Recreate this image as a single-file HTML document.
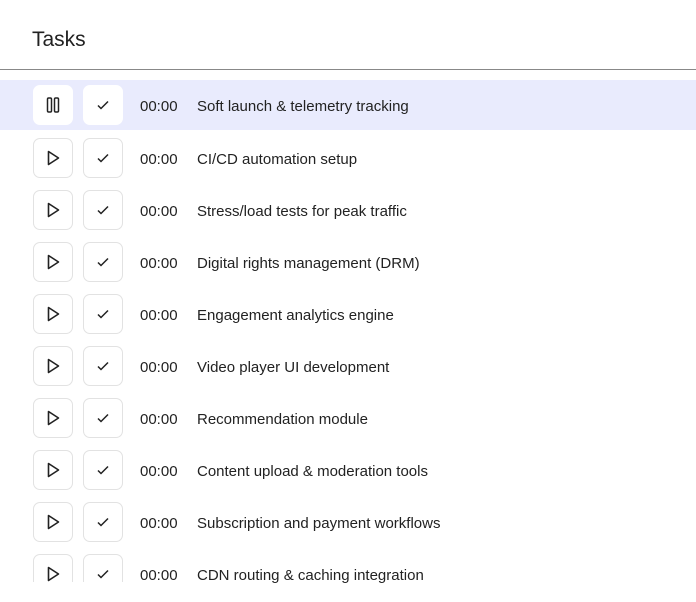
<!DOCTYPE html>
<html><head><style>
body{margin:0;width:696px;height:600px;overflow:hidden;background:#fff;font-family:"Liberation Sans",sans-serif;color:#222}
h1{position:absolute;left:32px;top:28px;margin:0;font-size:21px;font-weight:normal;color:#222}
.line{position:absolute;left:0;top:69px;width:696px;height:1px;background:#888}
.list{position:absolute;left:0;top:80px;width:696px;height:506px;overflow:hidden}
.row{position:relative;height:52px;display:flex;align-items:center;padding-top:2px;box-sizing:border-box}
.row.a{background:#e9ebfd;height:50px;margin-bottom:2px}
.btn{position:absolute;top:6px;width:38px;height:38px;border:1px solid #e2e2e2;border-radius:7px;background:#fff;display:flex;align-items:center;justify-content:center;box-sizing:content-box}
.row.a .btn{top:5px;border-color:#fff}
.b1{left:33px}.b2{left:83px}
.t{position:absolute;left:140px;font-size:15px}
.n{position:absolute;left:197px;font-size:15px}
.cut{position:absolute;left:0;top:582px;width:132px;height:20px;background:#fff}
</style></head><body>
<h1>Tasks</h1><div class="line"></div>
<div class="list">
<div class="row a"><div class="btn b1"><svg width="16" height="18"><rect x="2.5" y="2" width="4" height="14" rx="1.2" fill="none" stroke="#222" stroke-width="1.5"/><rect x="9.5" y="2" width="4" height="14" rx="1.2" fill="none" stroke="#222" stroke-width="1.5"/></svg></div><div class="btn b2"><svg width="14" height="12"><path d="M2 6.5l3 3L12 2.5" fill="none" stroke="#222" stroke-width="1.5"/></svg></div><span class="t">00:00</span><span class="n">Soft launch &amp; telemetry tracking</span></div>
</div>
<div class="cut"></div>
<script>
var items=["CI/CD automation setup","Stress/load tests for peak traffic","Digital rights management (DRM)","Engagement analytics engine","Video player UI development","Recommendation module","Content upload &amp; moderation tools","Subscription and payment workflows","CDN routing &amp; caching integration"];
var h="";items.forEach(function(s){h+='<div class="row"><div class="btn b1"><svg width="16" height="18"><path d="M3.5 2.5L13.5 9 3.5 15.5Z" fill="none" stroke="#222" stroke-width="1.6" stroke-linejoin="round"/></svg></div><div class="btn b2"><svg width="14" height="12"><path d="M2 6.5l3 3L12 2.5" fill="none" stroke="#222" stroke-width="1.5"/></svg></div><span class="t">00:00</span><span class="n">'+s+'</span></div>';});
document.querySelector('.list').insertAdjacentHTML('beforeend',h);
</script>
</body></html>
